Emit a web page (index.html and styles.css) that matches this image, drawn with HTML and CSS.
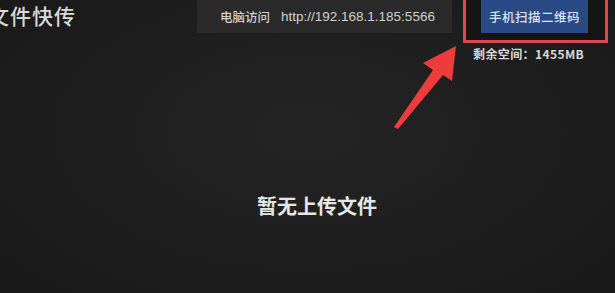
FILE: index.html
```html
<!DOCTYPE html>
<html lang="zh-CN">
<head>
<meta charset="utf-8">
<title>文件快传</title>
<link rel="stylesheet" href="styles.css">
</head>
<body>
<div class="screen">
  <header class="top">
    <h1 class="title">文件快传</h1>
    <div class="addr"><span class="addr-label">电脑访问</span><span class="addr-url">http://192.168.1.185:5566</span></div>
    <div class="right">
      <div class="hl"><div class="btn">手机扫描二维码</div></div>
      <div class="space">剩余空间：1455MB</div>
    </div>
  </header>
  <main class="empty">暂无上传文件</main>
  <svg class="arrow" width="615" height="293" viewBox="0 0 615 293" aria-hidden="true">
    <polygon points="456,46 452,81 443,75 398,129 394,127 433,70 423,63" fill="#ee3b3b"/>
  </svg>
</div>
</body>
</html>
```
FILE: styles.css
```css
html, body {
  margin: 0;
  padding: 0;
}
body {
  width: 615px;
  height: 293px;
  overflow: hidden;
  background: #1c1c1c;
  font-family: "Noto Sans CJK SC", "Liberation Sans", sans-serif;
}
.screen {
  position: relative;
  width: 615px;
  height: 293px;
  overflow: hidden;
  background: radial-gradient(ellipse 70% 80% at 50% 45%, #242424 0%, #1e1e1e 55%, #181818 100%);
  display: flex;
  flex-direction: column;
}
.top {
  display: flex;
  align-items: flex-start;
  gap: 11px;
  padding-right: 7px;
  height: 64px;
}
.title {
  flex: 1;
  margin: 0 0 0 -12px;
  padding-top: 2px;
  font-size: 21px;
  line-height: 26px;
  font-weight: 500;
  color: #d8d8d8;
  letter-spacing: 1px;
  white-space: nowrap;
}
.addr {
  width: 232px;
  height: 33px;
  padding-left: 23px;
  background: #2a2a2a;
  display: flex;
  align-items: center;
  gap: 11px;
  color: #d0d0d0;
  font-size: 12.5px;
  font-weight: 500;
  white-space: nowrap;
}
.addr-url {
  font-family: "Liberation Sans", sans-serif;
  font-size: 13.5px;
}
.right {
  width: 145px;
  display: flex;
  flex-direction: column;
}
.hl {
  height: 40px;
  border: 3px solid #e2474b;
  border-top: none;
  background: #151515;
  padding-left: 15px;
}
.btn {
  width: 107px;
  height: 33px;
  background: #2a4a86;
  color: #dde4ef;
  font-size: 12.5px;
  font-weight: 500;
  letter-spacing: 0.5px;
  display: flex;
  align-items: center;
  justify-content: center;
  white-space: nowrap;
}
.space {
  margin-top: 3px;
  padding-left: 10px;
  font-size: 12px;
  line-height: 15px;
  font-weight: 700;
  letter-spacing: 0.4px;
  color: #d8d8d8;
  white-space: nowrap;
}
.empty {
  padding-top: 129px;
  padding-left: 19px;
  text-align: center;
  font-size: 20px;
  line-height: 26px;
  font-weight: 700;
  color: #e6e6e6;
}
.arrow {
  position: absolute;
  left: 0;
  top: 0;
  pointer-events: none;
}
```
